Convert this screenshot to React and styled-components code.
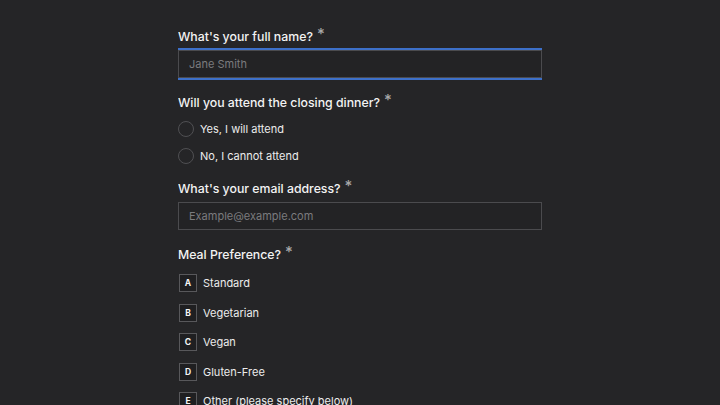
import styled, { createGlobalStyle } from "styled-components";

const GlobalStyle = createGlobalStyle`
  html, body {
    margin: 0;
    padding: 0;
    background: #252527;
    font-family: Inter, "Noto Sans", sans-serif;
    color: #f1f1f1;
  }
  * { box-sizing: border-box; }
`;

const Page = styled.div`
  width: 364px;
  margin: 0 auto;
  padding-top: 29px;
  height: 405px;
  overflow: hidden;
`;

const Field = styled.div`
  display: flex;
  flex-direction: column;
  gap: ${(p) => p.gap || 5}px;
  margin-bottom: ${(p) => p.after || 17}px;
`;

const Label = styled.div`
  font-size: 12.3px;
  line-height: 16px;
  height: 16px;
  font-weight: 500;
  color: #f3f3f3;
`;

const Star = styled.span`
  color: #a8a8a8;
  font-size: 15px;
  line-height: 0;
  margin-left: 4px;
  position: relative;
  top: -2px;
`;

const Input = styled.input`
  width: 100%;
  height: 28px;
  padding: 0 10px;
  background: #232325;
  border: 1px solid #4b4b4e;
  outline: none;
  box-shadow: ${(p) => (p.focused ? "0 0 0 2px #3d70c9" : "none")};
  color: #eee;
  font-family: Inter, "Noto Sans", sans-serif;
  font-size: 11px;

  &::placeholder {
    color: #7b7b7e;
  }
`;

const RadioList = styled.div`
  display: flex;
  flex-direction: column;
`;

const RadioRow = styled.label`
  display: flex;
  align-items: center;
  gap: 6px;
  height: 27px;
  font-size: 11px;
  color: #ececec;
`;

const Circle = styled.span`
  width: 16px;
  height: 16px;
  border-radius: 50%;
  border: 1px solid #505053;
`;

const OptionList = styled.div`
  display: flex;
  flex-direction: column;
  gap: 11.6px;
  margin-left: 1px;
`;

const OptionRow = styled.div`
  display: flex;
  align-items: center;
  gap: 6px;
  height: 18px;
  font-size: 11px;
  color: #ececec;
`;

const Key = styled.span`
  width: 18px;
  height: 18px;
  border: 1px solid #58585b;
  background: #1f1f21;
  display: flex;
  align-items: center;
  justify-content: center;
  font-size: 8.5px;
  font-weight: 700;
  color: #f5f5f5;
`;

const meals = [
  ["A", "Standard"],
  ["B", "Vegetarian"],
  ["C", "Vegan"],
  ["D", "Gluten-Free"],
  ["E", "Other (please specify below)"],
];

export default function App() {
  return (
    <>
      <GlobalStyle />
      <Page>
        <Field>
          <Label>
            What's your full name?<Star>*</Star>
          </Label>
          <Input focused placeholder="Jane Smith" />
        </Field>

        <Field gap={4} after={12}>
          <Label>
            Will you attend the closing dinner?<Star>*</Star>
          </Label>
          <RadioList>
            <RadioRow>
              <Circle />
              Yes, I will attend
            </RadioRow>
            <RadioRow>
              <Circle />
              No, I cannot attend
            </RadioRow>
          </RadioList>
        </Field>

        <Field>
          <Label>
            What's your email address?<Star>*</Star>
          </Label>
          <Input placeholder="Example@example.com" />
        </Field>

        <Field gap={11}>
          <Label>
            Meal Preference?<Star>*</Star>
          </Label>
          <OptionList>
            {meals.map(([k, t]) => (
              <OptionRow key={k}>
                <Key>{k}</Key>
                {t}
              </OptionRow>
            ))}
          </OptionList>
        </Field>
      </Page>
    </>
  );
}
